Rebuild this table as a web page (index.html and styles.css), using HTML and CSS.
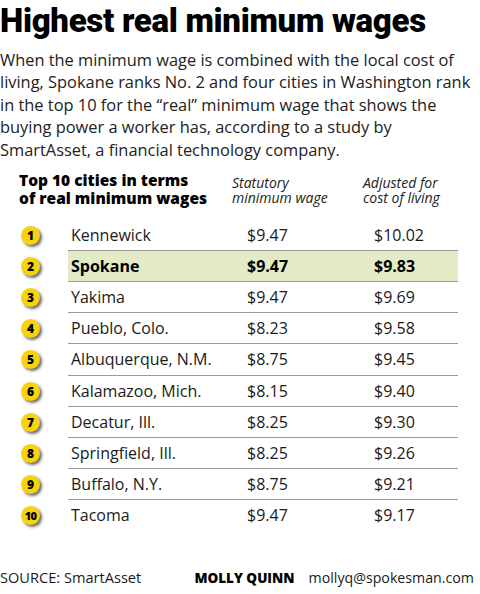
FILE: index.html
```html
<!DOCTYPE html>
<html lang="en">
<head>
    <meta charset="UTF-8">
    <title>Highest real minimum wages</title>
    <link rel="stylesheet" href="styles.css">
</head>
<body>
    <div class="graphic">
        <!-- headline -->
        <h1 class="title">Highest real minimum wages</h1>
        <p class="intro">When the minimum wage is combined with the local cost of living, Spokane ranks No. 2 and four cities in Washington rank in the top 10 for the “real” minimum wage that shows the buying power a worker has, according to a study by SmartAsset, a financial technology company.</p>

        <!-- table header -->
        <div class="table-head">
            <div class="table-title">Top 10 cities in terms<br>of real minimum wages</div>
            <div class="col-label col-stat">Statutory<br>minimum wage</div>
            <div class="col-label">Adjusted for<br>cost of living</div>
        </div>

        <!-- rows -->
        <div class="rows">
            <div class="row"><span class="rank">1</span><div class="cells"><span class="city">Kennewick</span><span class="stat">$9.47</span><span class="adj">$10.02</span></div></div>
            <div class="row highlight"><span class="rank">2</span><div class="cells"><span class="city">Spokane</span><span class="stat">$9.47</span><span class="adj">$9.83</span></div></div>
            <div class="row"><span class="rank">3</span><div class="cells"><span class="city">Yakima</span><span class="stat">$9.47</span><span class="adj">$9.69</span></div></div>
            <div class="row"><span class="rank">4</span><div class="cells"><span class="city">Pueblo, Colo.</span><span class="stat">$8.23</span><span class="adj">$9.58</span></div></div>
            <div class="row"><span class="rank">5</span><div class="cells"><span class="city">Albuquerque, N.M.</span><span class="stat">$8.75</span><span class="adj">$9.45</span></div></div>
            <div class="row"><span class="rank">6</span><div class="cells"><span class="city">Kalamazoo, Mich.</span><span class="stat">$8.15</span><span class="adj">$9.40</span></div></div>
            <div class="row"><span class="rank">7</span><div class="cells"><span class="city">Decatur, Ill.</span><span class="stat">$8.25</span><span class="adj">$9.30</span></div></div>
            <div class="row"><span class="rank">8</span><div class="cells"><span class="city">Springfield, Ill.</span><span class="stat">$8.25</span><span class="adj">$9.26</span></div></div>
            <div class="row"><span class="rank">9</span><div class="cells"><span class="city">Buffalo, N.Y.</span><span class="stat">$8.75</span><span class="adj">$9.21</span></div></div>
            <div class="row last"><span class="rank small">10</span><div class="cells"><span class="city">Tacoma</span><span class="stat">$9.47</span><span class="adj">$9.17</span></div></div>
        </div>

        <!-- credits -->
        <div class="footer">
            <span class="source">SOURCE: SmartAsset</span>
            <span class="credit"><b>MOLLY QUINN</b><span class="email">mollyq@spokesman.com</span></span>
        </div>
    </div>
</body>
</html>
```

FILE: styles.css
```css
* {
    margin: 0;
    padding: 0;
    box-sizing: border-box;
}

body {
    background-color: #ffffff;
    font-family: "Open Sans", Arial, sans-serif;
    color: #1a1a1a;
}

.graphic {
    width: 480px;
    height: 594px;
    padding-top: 2px;
}

/* headline */
.title {
    font-family: Roboto, Arial, sans-serif;
    font-weight: 900;
    font-size: 33px;
    line-height: 38px;
    letter-spacing: -0.3px;
    color: #000;
}

.intro {
    font-size: 16.4px;
    line-height: 22.4px;
    margin-top: 9px;
    color: #222;
}

/* table header */
.table-head {
    display: flex;
    margin-top: 10px;
    padding-left: 19px;
}

.table-title {
    width: 213px;
    font-weight: 800;
    font-size: 15.5px;
    line-height: 18px;
    color: #000;
}

.col-label {
    font-style: italic;
    font-size: 14px;
    line-height: 14.5px;
    color: #222;
    padding-top: 5px;
}

.col-stat {
    width: 131px;
}

/* rows */
.rows {
    margin-top: 13px;
}

.row {
    display: flex;
    align-items: center;
    height: 31.1px;
}

.rank {
    width: 19px;
    height: 19px;
    margin: 0 28px 0 21px;
    border-radius: 50%;
    background-color: #f6d20f;
    box-shadow: 2px 2px 3px rgba(0, 0, 0, 0.6);
    font-weight: 800;
    font-size: 12px;
    line-height: 19px;
    text-align: center;
    color: #000;
    flex-shrink: 0;
}

.rank.small {
    font-size: 11px;
    letter-spacing: -0.6px;
}

.cells {
    display: flex;
    align-items: center;
    width: 390px;
    height: 100%;
    border-bottom: 1.5px solid #9a9a9a;
    font-size: 16px;
}

.row.last .cells {
    border-bottom: none;
}

.row.highlight .cells {
    background-color: #e2ebc5;
    border-bottom-color: #9aa08a;
    font-weight: 700;
    color: #000;
}

.city {
    width: 179px;
    padding-left: 3px;
}

.stat {
    width: 127px;
}

/* credits */
.footer {
    display: flex;
    justify-content: space-between;
    align-items: baseline;
    margin-top: 36px;
    padding-right: 6px;
    font-size: 14.6px;
}

.credit b {
    font-weight: 800;
    font-size: 13.5px;
    color: #000;
}

.email {
    margin-left: 14px;
    font-size: 14.2px;
}
```
